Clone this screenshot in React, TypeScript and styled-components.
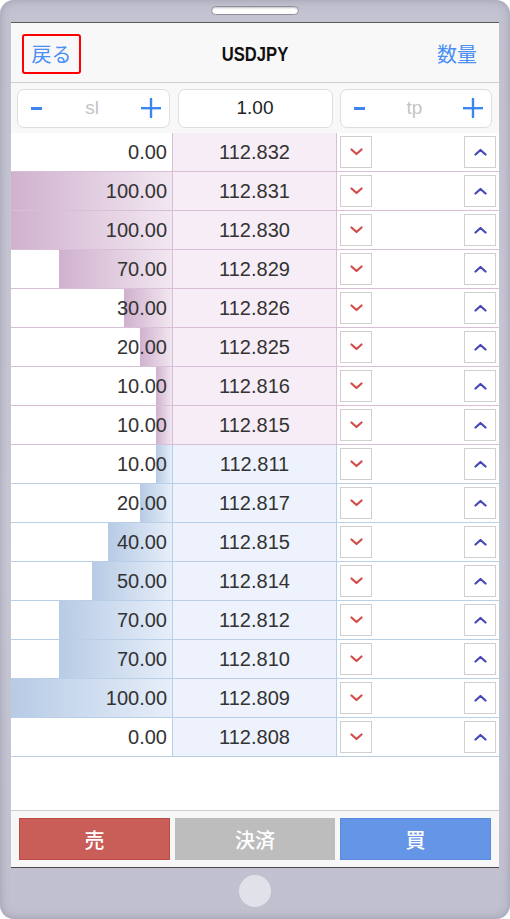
import React from "react";
import styled, { createGlobalStyle } from "styled-components";

const GlobalStyle = createGlobalStyle`
  html, body { margin: 0; padding: 0; background: #ffffff; }
  body { font-family: "Liberation Sans", Arial, sans-serif; }
  * { box-sizing: border-box; }
`;

const SANS = `"Liberation Sans", Arial, "Noto Sans CJK JP", sans-serif`;
const CJK = `"Noto Sans CJK JP", "Liberation Sans", sans-serif`;

type Side = "sell" | "buy";

const palette = {
  sell: {
    line: "#d8bfd7",
    cell: "#f7edf6",
    barFrom: "#d0b1ce",
    barTo: "#f2e7f1",
  },
  buy: {
    line: "#b9cee7",
    cell: "#edf2fc",
    barFrom: "#b7cbe5",
    barTo: "#e6eef9",
  },
};

const Phone = styled.div`
  width: 510px;
  height: 919px;
  border-radius: 14px;
  background: linear-gradient(180deg, #c2c2d0 0%, #c8c8d5 60%, #c0c0cf 100%);
  box-shadow: inset 0 0 10px rgba(110, 110, 140, 0.45);
  display: flex;
  flex-direction: column;
  align-items: center;
  padding-top: 6px;
`;

const Speaker = styled.div`
  width: 88px;
  height: 9px;
  border-radius: 5px;
  background: #ffffff;
  border: 1px solid #8f8f9c;
  box-shadow: inset 0 1px 2px rgba(0, 0, 0, 0.25);
`;

const Screen = styled.div`
  margin-top: 7px;
  width: 488px;
  height: 846px;
  background: #ffffff;
  border-top: 1px solid #5a5a5a;
  border-bottom: 1px solid #4a4a4a;
  display: flex;
  flex-direction: column;
`;

const Header = styled.header`
  height: 60px;
  flex: none;
  background: #f8f8f8;
  border-bottom: 1px solid #cfcfcf;
  display: grid;
  grid-template-columns: 1fr auto 1fr;
  align-items: center;
`;

const BackLink = styled.div`
  justify-self: start;
  margin-left: 11px;
  margin-top: 2px;
  width: 59px;
  height: 40px;
  border: 2.5px solid #ff0000;
  border-radius: 3px;
  display: flex;
  align-items: center;
  justify-content: center;
  font-family: ${CJK};
  font-size: 20px;
  color: #4a8ff2;
`;

const Title = styled.div`
  font-family: ${SANS};
  font-weight: bold;
  font-size: 21px;
  color: #111111;
  transform: scaleX(0.79);
  margin-top: 3px;
`;

const QtyLink = styled.div`
  justify-self: end;
  margin-right: 22px;
  margin-top: 2px;
  font-family: ${CJK};
  font-size: 20px;
  color: #4a8ff2;
`;

const InputBar = styled.div`
  height: 50px;
  flex: none;
  background: #f8f8f8;
  display: flex;
  align-items: center;
  justify-content: space-between;
  padding: 0 7px 0 6px;
`;

const Field = styled.div<{ $w: number }>`
  width: ${(p) => p.$w}px;
  height: 39px;
  background: #ffffff;
  border: 1px solid #dedede;
  border-radius: 7px;
  display: flex;
  align-items: center;
  justify-content: space-between;
  padding: 0 8px 0 13px;
  font-family: ${SANS};
  font-size: 19px;
`;

const CenterField = styled(Field)`
  justify-content: center;
  padding: 0;
  color: #222222;
`;

const Placeholder = styled.span`
  color: #c4c4c4;
`;

const Board = styled.div`
  flex: none;
  display: flex;
  flex-direction: column;
`;

const Row = styled.div<{ $side: Side }>`
  height: 39px;
  display: grid;
  grid-template-columns: 162px 164px 162px;
  border-bottom: 1px solid ${(p) => palette[p.$side].line};
`;

const VolumeCell = styled.div<{ $side: Side }>`
  position: relative;
  background: #ffffff;
  border-right: 1px solid ${(p) => palette[p.$side].line};
  display: flex;
  align-items: center;
  justify-content: flex-end;
  padding-right: 5px;
  padding-top: 1px;
  font-family: ${SANS};
  font-size: 20px;
  color: #333333;
`;

const DepthBar = styled.div<{ $side: Side }>`
  position: absolute;
  top: 0;
  bottom: 0;
  right: 0;
  background: linear-gradient(
    90deg,
    ${(p) => palette[p.$side].barFrom},
    ${(p) => palette[p.$side].barTo}
  );
`;

const VolumeText = styled.span`
  position: relative;
`;

const PriceCell = styled.div<{ $side: Side }>`
  background: ${(p) => palette[p.$side].cell};
  border-right: 1px solid ${(p) => palette[p.$side].line};
  display: flex;
  align-items: center;
  justify-content: center;
  padding-top: 1px;
  font-family: ${SANS};
  font-size: 20px;
  color: #333333;
`;

const ActionCell = styled.div`
  background: #ffffff;
  display: flex;
  align-items: center;
  justify-content: space-between;
  padding: 0 3px 0 3px;
`;

const StepButton = styled.div`
  width: 32px;
  height: 32px;
  border: 1px solid #cfcfcf;
  background: #ffffff;
  display: flex;
  align-items: center;
  justify-content: center;
`;

const Spacer = styled.div`
  flex: 1;
  background: #ffffff;
`;

const Footer = styled.footer`
  height: 57px;
  flex: none;
  background: #f7f7f7;
  border-top: 1px solid #cccccc;
  display: grid;
  grid-template-columns: 151px 160px 151px;
  column-gap: 5px;
  padding: 7px 8px;
`;

const TradeButton = styled.div<{ $bg: string; $edge: string }>`
  background: ${(p) => p.$bg};
  border: 1px solid ${(p) => p.$edge};
  display: flex;
  align-items: center;
  justify-content: center;
  font-family: ${CJK};
  font-size: 20px;
  font-weight: 500;
  color: #ffffff;
`;

const HomeButton = styled.div`
  margin-top: 7px;
  width: 32px;
  height: 32px;
  border-radius: 50%;
  background: #e1e1e9;
`;

const Minus = () => (
  <svg width="12" height="12" viewBox="0 0 12 12">
    <rect x="0" y="5" width="11" height="3" fill="#3d86f2" />
  </svg>
);

const Plus = () => (
  <svg width="20" height="20" viewBox="0 0 20 20">
    <rect x="0" y="9" width="20" height="2.4" fill="#3d86f2" />
    <rect x="8.8" y="0" width="2.4" height="20" fill="#3d86f2" />
  </svg>
);

const ChevronDown = () => (
  <svg width="13" height="8" viewBox="0 0 13 8">
    <polyline
      points="1.5,1.5 6.5,6 11.5,1.5"
      fill="none"
      stroke="#d24d4a"
      strokeWidth="2.2"
      strokeLinecap="round"
      strokeLinejoin="round"
    />
  </svg>
);

const ChevronUp = () => (
  <svg width="13" height="8" viewBox="0 0 13 8">
    <polyline
      points="1.5,6.5 6.5,2 11.5,6.5"
      fill="none"
      stroke="#4747b6"
      strokeWidth="2.2"
      strokeLinecap="round"
      strokeLinejoin="round"
    />
  </svg>
);

type Level = { volume: number; price: string; side: Side };

const levels: Level[] = [
  { volume: 0, price: "112.832", side: "sell" },
  { volume: 100, price: "112.831", side: "sell" },
  { volume: 100, price: "112.830", side: "sell" },
  { volume: 70, price: "112.829", side: "sell" },
  { volume: 30, price: "112.826", side: "sell" },
  { volume: 20, price: "112.825", side: "sell" },
  { volume: 10, price: "112.816", side: "sell" },
  { volume: 10, price: "112.815", side: "sell" },
  { volume: 10, price: "112.811", side: "buy" },
  { volume: 20, price: "112.817", side: "buy" },
  { volume: 40, price: "112.815", side: "buy" },
  { volume: 50, price: "112.814", side: "buy" },
  { volume: 70, price: "112.812", side: "buy" },
  { volume: 70, price: "112.810", side: "buy" },
  { volume: 100, price: "112.809", side: "buy" },
  { volume: 0, price: "112.808", side: "buy" },
];

const MAX_VOLUME = 100;

export default function App() {
  return (
    <>
      <GlobalStyle />
      <Phone>
        <Speaker />
        <Screen>
          <Header>
            <BackLink>戻る</BackLink>
            <Title>USDJPY</Title>
            <QtyLink>数量</QtyLink>
          </Header>

          <InputBar>
            <Field $w={153}>
              <Minus />
              <Placeholder>sl</Placeholder>
              <Plus />
            </Field>
            <CenterField $w={155}>1.00</CenterField>
            <Field $w={152}>
              <Minus />
              <Placeholder>tp</Placeholder>
              <Plus />
            </Field>
          </InputBar>

          <Board>
            {levels.map((lv, i) => (
              <Row key={i} $side={lv.side}>
                <VolumeCell $side={lv.side}>
                  {lv.volume > 0 && (
                    <DepthBar
                      $side={lv.side}
                      style={{ width: `${(lv.volume / MAX_VOLUME) * 100}%` }}
                    />
                  )}
                  <VolumeText>{lv.volume.toFixed(2)}</VolumeText>
                </VolumeCell>
                <PriceCell $side={lv.side}>{lv.price}</PriceCell>
                <ActionCell>
                  <StepButton>
                    <ChevronDown />
                  </StepButton>
                  <StepButton>
                    <ChevronUp />
                  </StepButton>
                </ActionCell>
              </Row>
            ))}
          </Board>

          <Spacer />

          <Footer>
            <TradeButton $bg="#c95d58" $edge="#bb4d48">売</TradeButton>
            <TradeButton $bg="#bdbdbd" $edge="#bdbdbd">決済</TradeButton>
            <TradeButton $bg="#6595e7" $edge="#5a8ade">買</TradeButton>
          </Footer>
        </Screen>
        <HomeButton />
      </Phone>
    </>
  );
}
